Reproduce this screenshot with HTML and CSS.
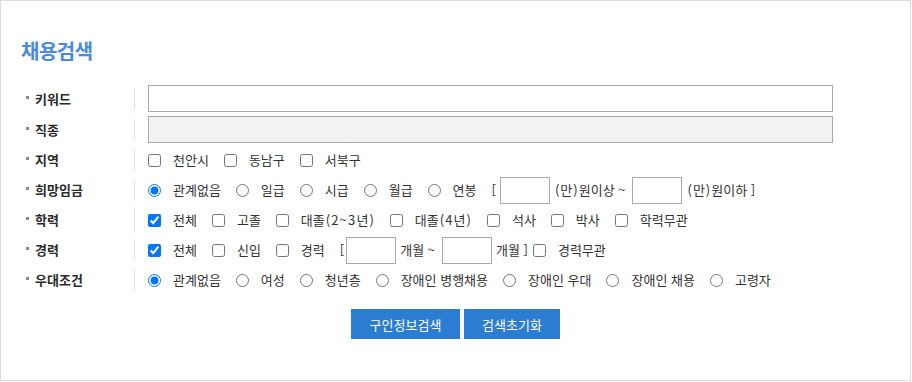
FILE: index.html
```html
<!DOCTYPE html>
<html lang="ko">
<head>
<meta charset="utf-8">
<title>채용검색</title>
<link rel="stylesheet" href="styles.css">
</head>
<body>
<div class="box">
  <h2 class="title">채용검색</h2>
  <div class="form">
    <div class="row">
      <div class="label">키워드</div>
      <div class="field"><input type="text" class="text-wide"></div>
    </div>
    <div class="row">
      <div class="label">직종</div>
      <div class="field"><input type="text" class="text-wide disabled" disabled></div>
    </div>
    <div class="row">
      <div class="label">지역</div>
      <div class="field">
        <label class="opt"><input type="checkbox"><span>천안시</span></label>
        <label class="opt"><input type="checkbox"><span>동남구</span></label>
        <label class="opt"><input type="checkbox"><span>서북구</span></label>
      </div>
    </div>
    <div class="row">
      <div class="label">희망임금</div>
      <div class="field">
        <label class="opt"><input type="radio" name="pay" checked><span>관계없음</span></label>
        <label class="opt"><input type="radio" name="pay"><span>일급</span></label>
        <label class="opt"><input type="radio" name="pay"><span>시급</span></label>
        <label class="opt"><input type="radio" name="pay"><span>월급</span></label>
        <label class="opt"><input type="radio" name="pay"><span>연봉</span></label>
        <span class="br-open">[</span>
        <input type="text" class="text-small">
        <span class="unit"><span class="paren">(</span>만<span class="paren">)</span>원이상 ~</span>
        <input type="text" class="text-small">
        <span class="unit"><span class="paren">(</span>만<span class="paren">)</span>원이하 ]</span>
      </div>
    </div>
    <div class="row">
      <div class="label">학력</div>
      <div class="field">
        <label class="opt"><input type="checkbox" checked><span>전체</span></label>
        <label class="opt"><input type="checkbox"><span>고졸</span></label>
        <label class="opt"><input type="checkbox"><span>대졸<span class="paren">(</span><span class="num">2~3</span>년<span class="paren">)</span></span></label>
        <label class="opt"><input type="checkbox"><span>대졸<span class="paren">(</span><span class="num">4</span>년<span class="paren">)</span></span></label>
        <label class="opt"><input type="checkbox"><span>석사</span></label>
        <label class="opt"><input type="checkbox"><span>박사</span></label>
        <label class="opt"><input type="checkbox"><span>학력무관</span></label>
      </div>
    </div>
    <div class="row">
      <div class="label">경력</div>
      <div class="field">
        <label class="opt"><input type="checkbox" checked><span>전체</span></label>
        <label class="opt"><input type="checkbox"><span>신입</span></label>
        <label class="opt"><input type="checkbox"><span>경력</span></label>
        <span class="br-open br-tight">[</span>
        <input type="text" class="text-small">
        <span class="unit">개월 ~</span>
        <input type="text" class="text-small">
        <span class="unit unit-close">개월 ]</span>
        <label class="opt"><input type="checkbox"><span>경력무관</span></label>
      </div>
    </div>
    <div class="row">
      <div class="label">우대조건</div>
      <div class="field">
        <label class="opt"><input type="radio" name="pref" checked><span>관계없음</span></label>
        <label class="opt"><input type="radio" name="pref"><span>여성</span></label>
        <label class="opt"><input type="radio" name="pref"><span>청년층</span></label>
        <label class="opt"><input type="radio" name="pref"><span>장애인 병행채용</span></label>
        <label class="opt"><input type="radio" name="pref"><span>장애인 우대</span></label>
        <label class="opt"><input type="radio" name="pref"><span>장애인 채용</span></label>
        <label class="opt"><input type="radio" name="pref"><span>고령자</span></label>
      </div>
    </div>
  </div>
  <div class="buttons">
    <button type="button" class="btn btn-search">구인정보검색</button>
    <button type="button" class="btn btn-reset">검색초기화</button>
  </div>
</div>
</body>
</html>
```

FILE: styles.css
```css
* { box-sizing: border-box; }
html, body { margin: 0; padding: 0; background: #fff; }
body {
  font-family: "Noto Sans CJK KR", "Noto Sans", sans-serif;
  font-size: 13px;
  color: #333;
}
.box {
  width: 911px;
  height: 381px;
  border: 1px solid #dcdcdc;
  padding-top: 36px;
}
.title {
  margin: 0 0 0 20px;
  font-size: 20px;
  line-height: 28px;
  font-weight: bold;
  color: #4a89dc;
  letter-spacing: -0.5px;
}
.form { margin-top: 18px; }
.row {
  display: flex;
  align-items: center;
  height: 30px;
  padding-left: 24px;
}
.row:nth-child(1), .row:nth-child(2) { height: 31px; }
.label {
  position: relative;
  width: 110px;
  height: 22px;
  line-height: 22px;
  padding-left: 10px;
  border-right: 1px solid #e2e2e2;
  font-weight: bold;
  color: #2b2b2b;
}
.label::before {
  content: "";
  position: absolute;
  left: 1px;
  top: 8px;
  width: 3px;
  height: 3px;
  background: #8a8a8a;
}
.field {
  display: flex;
  align-items: center;
  margin-left: 13px;
  line-height: 20px;
}
.text-wide {
  width: 685px;
  height: 27px;
  border: 1px solid #aaa;
  background: #fff;
  margin: 0;
}
.text-wide.disabled { background: #f2f2f2; }
.opt {
  display: flex;
  align-items: center;
  margin-right: 15px;
}
.opt input {
  width: 13px;
  height: 13px;
  margin: 0 12px 0 0;
}
.paren { margin: 0 1px; }
.num { letter-spacing: 1.2px; }
.br-open { margin-left: 0; margin-right: 4px; }
.br-tight { margin-right: 2px; }
.text-small {
  width: 50px;
  height: 27px;
  border: 1px solid #aaa;
  margin: 0;
}
.unit { margin: 0 7px 0 4px; }
.unit-close { margin-right: 5px; }
.buttons {
  display: flex;
  justify-content: center;
  gap: 4px;
  margin-top: 14px;
}
.btn {
  height: 30px;
  border: 0;
  background: #2a7dd1;
  color: #fff;
  font-family: "Noto Sans CJK KR", "Noto Sans", sans-serif;
  font-size: 13px;
  padding: 0;
}
.btn-search { width: 109px; }
.btn-reset { width: 96px; }
```
